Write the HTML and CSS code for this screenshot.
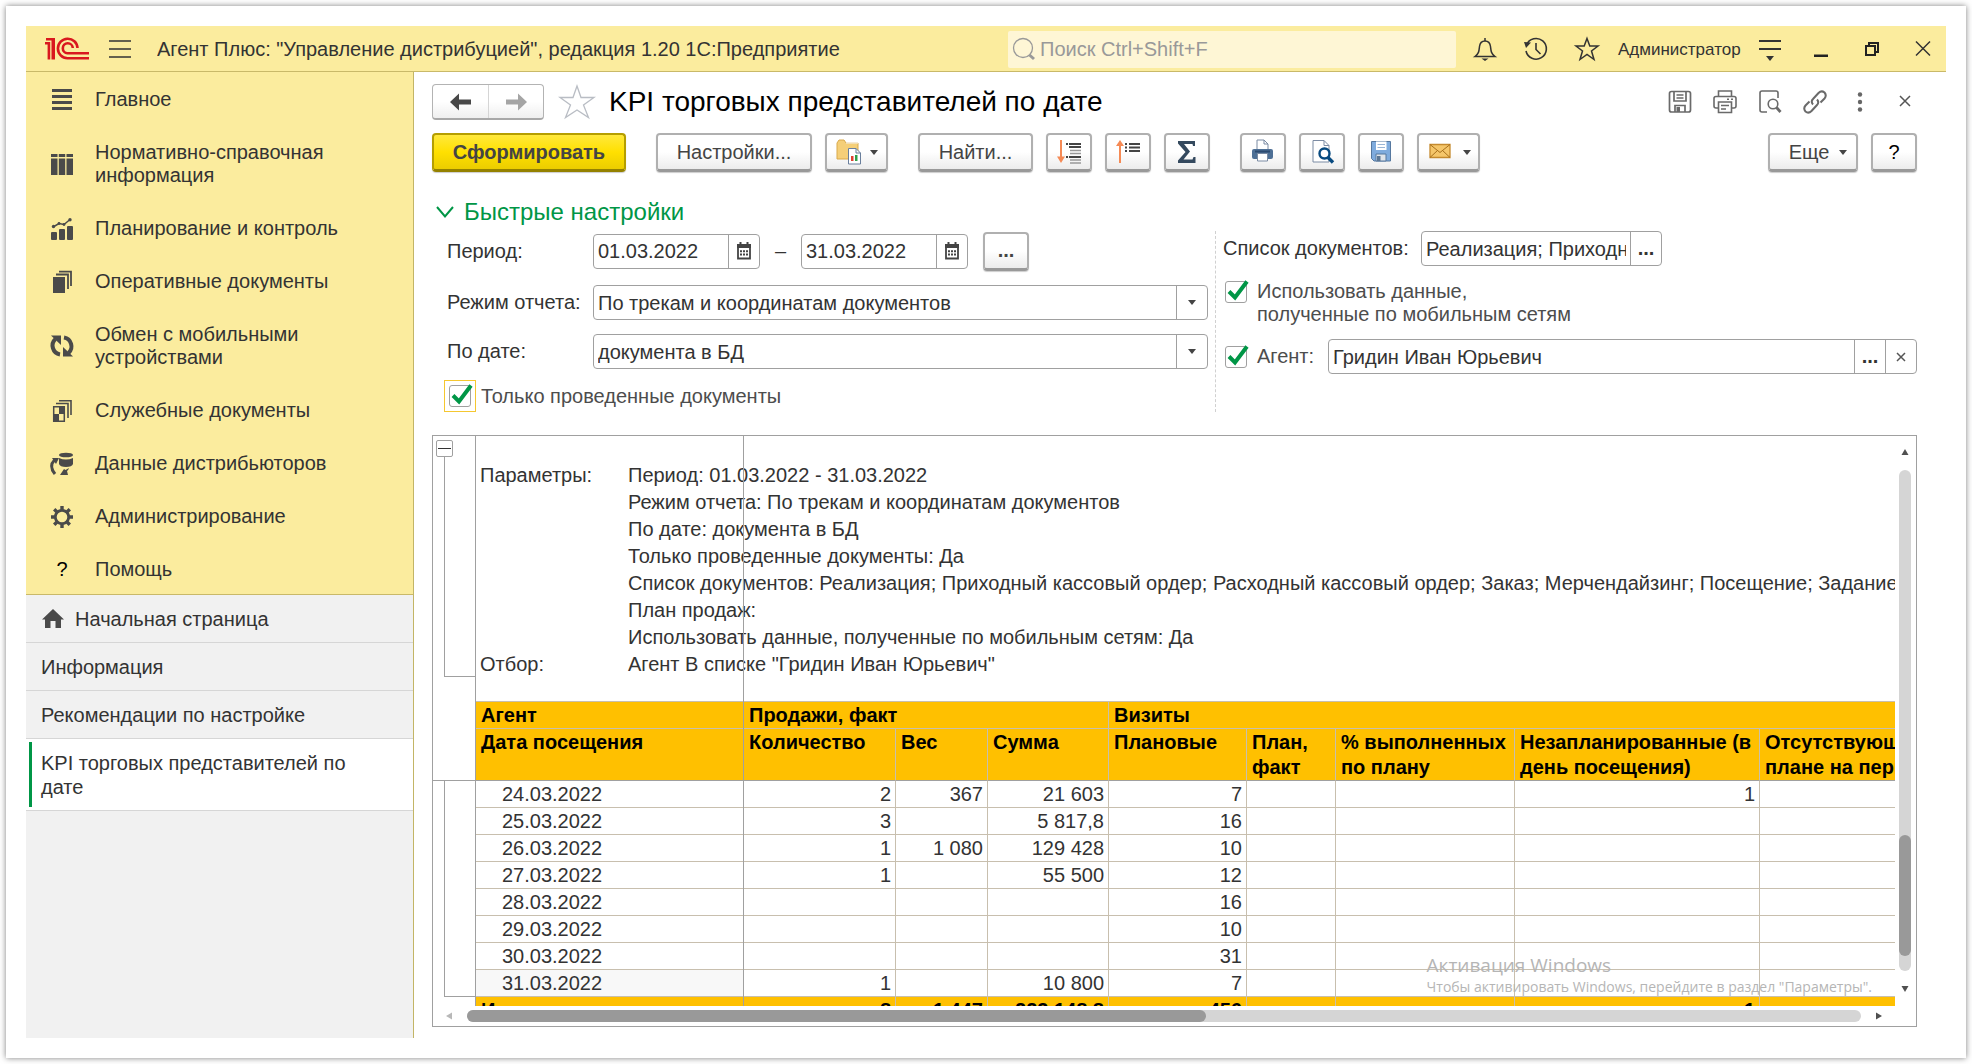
FILE: index.html
```html
<!DOCTYPE html>
<html lang="ru">
<head>
<meta charset="utf-8">
<meta name="viewport" content="width=device-width, initial-scale=1">
<title>KPI торговых представителей по дате</title>
<link rel="stylesheet" href="styles.css">
</head>
<body>
<div class="card">
<div class="app">
  <header class="topbar">
    <svg class="logo" width="44" height="24" viewBox="0 0 44 24" fill="#d9181e">
      <path d="M1 1H10V22.500H6.500V3.500H1ZM0 5H5.200V22.500H2.600V7.500H0Z"/>
      <path d="M32.500 11A9.800 9.800 0 1 0 22.500 21.300H44M27.800 11A5 5 0 1 0 22.500 16.300H44" fill="none" stroke="#d9181e" stroke-width="2.600"/>
    </svg>
    <button class="icon-btn burger" aria-label="Меню"><svg width="24" height="24" viewBox="0 0 24 24" stroke="#333" stroke-width="1.500"><path d="M1 4H23M1 12H23M1 20H23"/></svg></button>
    <div class="app-title">Агент Плюс: "Управление дистрибуцией", редакция 1.20 1С:Предприятие</div>
    <label class="search">
      <svg width="24" height="24" viewBox="0 0 24 24" fill="none" stroke="#999"><circle cx="11" cy="11" r="9.500" stroke-width="1.300"/><path d="M17.500 18L22 22" stroke-width="3"/></svg>
      <input type="search" placeholder="Поиск Ctrl+Shift+F" aria-label="Поиск">
    </label>
    <div class="top-tools">
      <button class="icon-btn" aria-label="Уведомления"><svg width="24" height="24" viewBox="0 0 24 24" fill="none" stroke="#333" stroke-width="1.500"><path d="M2 19.500C6 16.500 6 14 6.500 9.500C7 5.500 9.500 4 12 4S17 5.500 17.500 9.500C18 14 18 16.500 22 19.500Z"/><path d="M12 1V4"/><path d="M8.500 21.500H15.500L12 24Z" fill="#333" stroke="none"/></svg></button>
      <button class="icon-btn" aria-label="История"><svg width="24" height="24" viewBox="0 0 24 24" fill="none" stroke="#333" stroke-width="1.600"><path d="M2.500 8A10.300 10.300 0 1 1 2 14"/><path d="M12 6V12.500L16.500 17"/><path d="M0 5L7 5.500L2 11Z" fill="#333" stroke="none"/></svg></button>
      <button class="icon-btn" aria-label="Избранное"><svg width="24" height="24" viewBox="0 0 24 24" fill="none" stroke="#333" stroke-width="1.500"><path d="M12 1.500L14.800 9H23L16.500 14L19 22.500L12 17.500L5 22.500L7.500 14L1 9H9.200Z"/></svg></button>
      <span class="user">Администратор</span>
      <button class="icon-btn" aria-label="Сервис"><svg width="24" height="24" viewBox="0 0 24 24" stroke="#333" stroke-width="2"><path d="M1 4H23M1 12H23"/><path d="M8 19H16L12 24Z" fill="#333" stroke="none"/></svg></button>
      <button class="icon-btn" aria-label="Свернуть"><svg width="24" height="24" viewBox="0 0 24 24"><path d="M5 17.500H19V20H5Z" fill="#222"/></svg></button>
      <button class="icon-btn" aria-label="Развернуть"><svg width="24" height="24" viewBox="0 0 24 24" fill="none" stroke="#222" stroke-width="2"><path d="M6 9H15V18H6ZM9 9V6H18V15H15"/></svg></button>
      <button class="icon-btn" aria-label="Закрыть"><svg width="24" height="24" viewBox="0 0 24 24" stroke="#333" stroke-width="1.500"><path d="M5 4.500L19 18.500M19 4.500L5 18.500"/></svg></button>
    </div>
  </header>

  <div class="body">
    <aside class="sidebar">
      <nav class="sections">
        <a href="#"><svg width="24" height="24" viewBox="0 0 24 24" fill="#4a4a4a"><path d="M2 1H22V4H2ZM2 7H22V10H2ZM2 13H22V16H2ZM2 19H22V22H2Z"/></svg><span>Главное</span></a>
        <a href="#"><svg width="24" height="24" viewBox="0 0 24 24" fill="#4a4a4a"><path d="M1 2H7.500V5H1ZM8.800 2H15.200V5H8.800ZM16.500 2H23V5H16.500ZM1 6.500H7.500V23H1ZM8.800 6.500H15.200V23H8.800ZM16.500 6.500H23V23H16.500Z"/></svg><span>Нормативно-справочная<br>информация</span></a>
        <a href="#"><svg width="24" height="24" viewBox="0 0 24 24" fill="#4a4a4a"><rect x="1" y="15" width="6" height="8" rx="1"/><rect x="9" y="12" width="6" height="11" rx="1"/><rect x="17" y="9" width="6" height="14" rx="1"/><path d="M3 10L9 6.500L14 7.500L20 2.500" fill="none" stroke="#4a4a4a" stroke-width="1.500"/><circle cx="3.500" cy="9.500" r="1.700"/><circle cx="9" cy="6.500" r="1.400"/><circle cx="14" cy="7.500" r="1.400"/><circle cx="20" cy="2.800" r="1.700"/></svg><span>Планирование и контроль</span></a>
        <a href="#"><svg width="24" height="24" viewBox="0 0 24 24" fill="#4a4a4a"><path d="M3 7H15V23H3Z"/><path d="M6 4.500H18V19M9 1.700H21V16" fill="none" stroke="#4a4a4a" stroke-width="1.800"/></svg><span>Оперативные документы</span></a>
        <a href="#"><svg width="24" height="24" viewBox="0 0 24 24" fill="none" stroke="#4a4a4a" stroke-width="4"><path d="M10 20.500A9 9 0 0 1 5.500 5M14 3.500A9 9 0 0 1 18.500 19"/><path d="M1 1.500H11V11Z" fill="#4a4a4a" stroke="none"/><path d="M23 22.500H13V13Z" fill="#4a4a4a" stroke="none"/></svg><span>Обмен с мобильными<br>устройствами</span></a>
        <a href="#"><svg width="24" height="24" viewBox="0 0 24 24" fill="#4a4a4a"><path d="M6 4.500H18V19M9 1.700H21V16" fill="none" stroke="#4a4a4a" stroke-width="1.600"/><path d="M3.700 7.700H14.300V22.300H3.700Z" fill="none" stroke="#4a4a4a" stroke-width="1.500"/><path d="M9 8H14V15H9ZM4 15H9V22H4Z"/></svg><span>Служебные документы</span></a>
        <a href="#"><svg width="24" height="24" viewBox="0 0 24 24" fill="#4a4a4a"><ellipse cx="16" cy="3" rx="7" ry="2.300"/><path d="M9 6Q16 9 23 6V12Q22 15 16 15T9 12Z"/><path d="M5 22Q-1.500 14 4.500 8" fill="none" stroke="#4a4a4a" stroke-width="3"/><path d="M2 6H9L6 12ZM19 16Q18 19 17 19L18 23H10L14 17L15.500 18Z"/></svg><span>Данные дистрибьюторов</span></a>
        <a href="#"><svg width="24" height="24" viewBox="0 0 24 24" fill="none" stroke="#4a4a4a"><circle cx="12" cy="12" r="6.700" stroke-width="2.800"/><path d="M12 1V5M12 19V23M1 12H5M19 12H23M4.200 4.200L7 7M17 17L19.800 19.800M19.800 4.200L17 7M7 17L4.200 19.800" stroke-width="3.400"/></svg><span>Администрирование</span></a>
        <a href="#"><span class="q">?</span><span>Помощь</span></a>
      </nav>
      <nav class="windows">
        <a href="#"><svg width="24" height="24" viewBox="0 0 24 24" fill="#4a4a4a"><path d="M12 2L23 12.500H20V21H14.500V14H9.500V21H4V12.500H1Z"/></svg>Начальная страница</a>
        <a href="#">Информация</a>
        <a href="#">Рекомендации по настройке</a>
        <a href="#" class="active">KPI торговых представителей по дате</a>
      </nav>
    </aside>

    <main class="main">
      <div class="title-row">
        <div class="history">
          <button aria-label="Назад"><svg width="24" height="20" viewBox="0 0 24 20" fill="#484848"><path d="M1 10L10 1.500V7.500H22V12.500H10V18.500Z"/></svg></button>
          <button aria-label="Вперед"><svg width="24" height="20" viewBox="0 0 24 20" fill="#a5a5a5"><path d="M23 10L14 1.500V7.500H2V12.500H14V18.500Z"/></svg></button>
        </div>
        <button class="icon-btn fav" aria-label="В избранное"><svg width="36" height="34" viewBox="0 0 36 34" fill="#fff" stroke="#b9bdc4" stroke-width="1.300"><path d="M18 1L22 12.500H35L24.500 20L29.500 32.500L18 25L6.500 32.500L11.500 20L1 12.500H14Z"/></svg></button>
        <h1>KPI торговых представителей по дате</h1>
        <div class="page-tools">
          <button class="icon-btn" aria-label="Сохранить"><svg width="24" height="24" viewBox="0 0 24 24" fill="none" stroke="#6a6a6a" stroke-width="1.700"><rect x="1.500" y="1.500" width="21" height="20.500" rx="2"/><path d="M6 2V11H18V2M8.500 5H15.500M8.500 8H15.500M7 22V15.500H17V22"/><path d="M8.500 17H12V22H8.500Z" fill="#6a6a6a" stroke="none"/></svg></button>
          <button class="icon-btn" aria-label="Печать"><svg width="24" height="24" viewBox="0 0 24 24" fill="none" stroke="#6a6a6a" stroke-width="1.600"><path d="M5.500 6V1H18.500V6M5 18H3Q1 18 1 16V8.500Q1 6.500 3 6.500H21Q23 6.500 23 8.500V16Q23 18 21 18H19"/><path d="M5.500 12H18.500V22.500H5.500ZM8 15.500H16M8 19H13M14 9.300H16M18 9.300H20"/></svg></button>
          <button class="icon-btn" aria-label="Просмотр"><svg width="24" height="24" viewBox="0 0 24 24" fill="none" stroke="#6a6a6a" stroke-width="1.600"><path d="M9 22H4Q2 22 2 20V3Q2 1 4 1H18Q20 1 20 3V8"/><circle cx="15" cy="14" r="4.800"/><path d="M18.500 17.500L22.500 22" stroke-width="2.800"/></svg></button>
          <button class="icon-btn" aria-label="Ссылка"><svg width="24" height="24" viewBox="0 0 24 24" fill="none" stroke="#6a6a6a" stroke-width="2"><path d="M10 14.500Q7.500 11.500 10 9L15.500 3Q18.500 0 21.500 2.500Q24 5.500 21.500 8.500L17.500 12.500"/><path d="M14 9.500Q16.500 12.500 14 15L8.500 21Q5.500 24 2.500 21.500Q0 18.500 2.500 15.500L6.500 11.500"/></svg></button>
          <button class="icon-btn" aria-label="Ещё"><svg width="24" height="24" viewBox="0 0 24 24" fill="#666"><circle cx="12" cy="4.500" r="2.200"/><circle cx="12" cy="12" r="2.200"/><circle cx="12" cy="19.500" r="2.200"/></svg></button>
          <button class="icon-btn" aria-label="Закрыть вкладку"><svg width="24" height="24" viewBox="0 0 24 24" stroke="#555" stroke-width="1.500"><path d="M7 6L17 16M17 6L7 16"/></svg></button>
        </div>
      </div>

      <div class="toolbar">
        <button class="btn primary">Сформировать</button>
        <button class="btn settings">Настройки...</button>
        <button class="btn wide" aria-label="Варианты отчета"><svg width="26" height="26" viewBox="0 0 26 26"><path d="M1 20V4L3 1H8L10 4H22V20Z" fill="#f5cf78" stroke="#d9a94a"/><path d="M10 4H22" stroke="#fff" stroke-width="1"/><path d="M12.500 9.500H20L24.500 14V25H12.500Z" fill="#fff" stroke="#6a7f9c"/><path d="M20 9.500V14H24.500" fill="none" stroke="#6a7f9c"/><path d="M15 17H17.500V22H15Z" fill="#e04030"/><path d="M19 16H21.500V22H19Z" fill="#2fa04a"/></svg><i class="caret"></i></button>
        <button class="btn find">Найти...</button>
        <button class="btn sq" aria-label="Развернуть группы"><svg width="26" height="26" viewBox="0 0 26 26"><path d="M5 1V19" stroke="#f58a55" stroke-width="2"/><path d="M1 17.500H9L5 24Z" fill="#f58a55"/><path d="M10 5H12M10 18H12M13 5H25M13 8H25M13 18H25" stroke="#444" stroke-width="1.800"/><path d="M14 11.500H25M14 14.500H25M14 21H25M14 24H25" stroke="#999" stroke-width="1.600"/></svg></button>
        <button class="btn sq" aria-label="Свернуть группы"><svg width="26" height="26" viewBox="0 0 26 26"><path d="M5 6V24" stroke="#f58a55" stroke-width="2"/><path d="M1 7H9L5 1Z" fill="#f58a55"/><path d="M10 5H12M10 8.500H12M10 12H12M14 5H25M14 8.500H25M14 12H25" stroke="#444" stroke-width="1.800"/></svg></button>
        <button class="btn sq" aria-label="Сумма"><svg width="26" height="26" viewBox="0 0 26 26" fill="#34495e"><path d="M4 2H21V7H19L18.500 5H10L16 12.500L9.500 20.500H18.500L19.500 18H21.500V24H4V21.500L11.500 13L4 4.500Z"/></svg></button>
        <span class="gap"></span>
        <button class="btn sq" aria-label="Печать отчета"><svg width="26" height="26" viewBox="0 0 26 26"><path d="M7 12V1H14L18 5V12Z" fill="#fff" stroke="#7b8ba3"/><path d="M14 1V5H18" fill="none" stroke="#7b8ba3"/><rect x="2" y="10" width="21" height="10" rx="2" fill="#4e7096"/><path d="M5 12.500H20" stroke="#2c4a70" stroke-width="2"/><path d="M7.500 14.500H17.500V22H7.500Z" fill="#fff" stroke="#7b8ba3"/></svg></button>
        <button class="btn sq" aria-label="Предпросмотр"><svg width="26" height="26" viewBox="0 0 26 26"><path d="M4 1.500H15L20 6.500V23H4Z" fill="#fff" stroke="#7b8ba3"/><path d="M15 1.500V6.500H20" fill="none" stroke="#7b8ba3"/><circle cx="15.500" cy="14.500" r="5" fill="#fff" stroke="#084a80" stroke-width="2.400"/><path d="M19 18.500L24 23.500" stroke="#084a80" stroke-width="3.400"/></svg></button>
        <button class="btn sq" aria-label="Сохранить отчет"><svg width="26" height="26" viewBox="0 0 26 26"><path d="M3.500 2.500H22.500V22H6L3.500 19.500Z" fill="#7fabdd" stroke="#56789f"/><path d="M8 2.500H18.500V11H8Z" fill="#fff"/><path d="M9.500 5.500H17M9.500 8.500H17" stroke="#9ab5d5"/><path d="M8 15H18V22H8Z" fill="#dfe4ea" stroke="#56789f"/><path d="M9 17H12.500V22H9Z" fill="#5c7794"/></svg></button>
        <button class="btn wide mail" aria-label="Отправить"><svg width="26" height="26" viewBox="0 0 26 26"><path d="M3 5.500H23V18.500H3Z" fill="#f5c66a" stroke="#c58a2e" stroke-width="1.300"/><path d="M3 5.500L13 13.500L23 5.500M3 18.500L10.500 11.500M23 18.500L15.500 11.500" fill="none" stroke="#a8701c"/></svg><i class="caret"></i></button>
        <button class="btn more">Еще<i class="caret"></i></button>
        <button class="btn sq help">?</button>
      </div>

      <button class="group-title"><svg width="18" height="14" viewBox="0 0 18 14" fill="none" stroke="#009646" stroke-width="2"><path d="M1 3L9 12.500L17 3"/></svg>Быстрые настройки</button>

      <form class="form">
        <div class="left">
          <div class="row period">
            <label for="d1">Период:</label>
            <span class="field date"><input id="d1" type="text" value="01.03.2022"><button type="button" aria-label="Календарь"><svg width="16" height="18" viewBox="0 0 16 18"><path d="M2 3H14V16.500H2Z" fill="none" stroke="#444" stroke-width="1.800"/><path d="M1 2H15V6H1ZM3.500 0H5.500V3H3.500ZM10.500 0H12.500V3H10.500Z" fill="#444"/><path d="M4 9.200H12M4 12.600H12" stroke="#444" stroke-width="2" stroke-dasharray="2 1"/></svg></button></span>
            <span class="dash">–</span>
            <span class="field date"><input type="text" value="31.03.2022" aria-label="Конец периода"><button type="button" aria-label="Календарь"><svg width="16" height="18" viewBox="0 0 16 18"><path d="M2 3H14V16.500H2Z" fill="none" stroke="#444" stroke-width="1.800"/><path d="M1 2H15V6H1ZM3.500 0H5.500V3H3.500ZM10.500 0H12.500V3H10.500Z" fill="#444"/><path d="M4 9.200H12M4 12.600H12" stroke="#444" stroke-width="2" stroke-dasharray="2 1"/></svg></button></span>
            <button type="button" class="btn sq dots">...</button>
          </div>
          <div class="row">
            <label for="mode">Режим отчета:</label>
            <span class="field grow"><select id="mode"><option>По трекам и координатам документов</option></select><span class="drop"><i class="caret"></i></span></span>
          </div>
          <div class="row">
            <label for="bydate">По дате:</label>
            <span class="field grow"><select id="bydate"><option>документа в БД</option></select><span class="drop"><i class="caret"></i></span></span>
          </div>
          <label class="check only"><span class="box focus"><input type="checkbox" checked><svg width="24" height="24" viewBox="0 0 24 24" fill="none" stroke="#009646" stroke-width="4"><path d="M4 12.500L10 18.500L22 2.500"/></svg></span>Только проведенные документы</label>
        </div>
        <div class="right">
          <div class="row">
            <label for="docs" class="docs-label">Список документов:</label>
            <span class="field docs"><input id="docs" type="text" value="Реализация; Приходный кассовый ордер"><button type="button" aria-label="Выбрать документы" class="ell">...</button></span>
          </div>
          <label class="check two"><span class="box"><input type="checkbox" checked><svg width="24" height="24" viewBox="0 0 24 24" fill="none" stroke="#009646" stroke-width="4"><path d="M4 12.500L10 18.500L22 2.500"/></svg></span><span>Использовать данные,<br>полученные по мобильным сетям</span></label>
          <div class="row">
            <label class="check agent"><span class="box"><input type="checkbox" checked><svg width="24" height="24" viewBox="0 0 24 24" fill="none" stroke="#009646" stroke-width="4"><path d="M4 12.500L10 18.500L22 2.500"/></svg></span>Агент:</label>
            <span class="field grow"><input type="text" value="Гридин Иван Юрьевич" aria-label="Агент"><button type="button" aria-label="Выбрать агента" class="ell">...</button><button type="button" aria-label="Очистить"><svg width="12" height="12" viewBox="0 0 12 12" stroke="#555" stroke-width="1.500"><path d="M2 2L10 10M10 2L2 10"/></svg></button></span>
          </div>
        </div>
      </form>

      <section class="report">
        <div class="gutter">
          <button class="minus" aria-label="Свернуть группу"></button>
          <div class="tree t1"></div>
          <div class="tree-space"></div>
          <div class="tree t2"></div>
        </div>
        <div class="sheet">
          <dl class="params">
            <dt>Параметры:</dt><dd>Период: 01.03.2022 - 31.03.2022</dd>
            <dd>Режим отчета: По трекам и координатам документов</dd>
            <dd>По дате: документа в БД</dd>
            <dd>Только проведенные документы: Да</dd>
            <dd>Список документов: Реализация; Приходный кассовый ордер; Расходный кассовый ордер; Заказ; Мерчендайзинг; Посещение; Задание; Возврат</dd>
            <dd>План продаж:</dd>
            <dd>Использовать данные, полученные по мобильным сетям: Да</dd>
            <dt>Отбор:</dt><dd>Агент В списке "Гридин Иван Юрьевич"</dd>
          </dl>
          <table>
            <colgroup><col class="c1"><col class="c2"><col class="c3"><col class="c4"><col class="c5"><col class="c6"><col class="c7"><col class="c8"><col class="c9"></colgroup>
            <thead>
              <tr><th>Агент</th><th colspan="3">Продажи, факт</th><th colspan="5">Визиты</th></tr>
              <tr class="h2"><th>Дата посещения</th><th>Количество</th><th>Вес</th><th>Сумма</th><th>Плановые</th><th>План,<br>факт</th><th>% выполненных<br>по плану</th><th>Незапланированные (в<br>день посещения)</th><th>Отсутствующие в<br>плане на период</th></tr>
            </thead>
            <tbody>
              <tr><td>24.03.2022</td><td>2</td><td>367</td><td>21 603</td><td>7</td><td></td><td></td><td>1</td><td></td></tr>
              <tr><td>25.03.2022</td><td>3</td><td></td><td>5 817,8</td><td>16</td><td></td><td></td><td></td><td></td></tr>
              <tr><td>26.03.2022</td><td>1</td><td>1 080</td><td>129 428</td><td>10</td><td></td><td></td><td></td><td></td></tr>
              <tr><td>27.03.2022</td><td>1</td><td></td><td>55 500</td><td>12</td><td></td><td></td><td></td><td></td></tr>
              <tr><td>28.03.2022</td><td></td><td></td><td></td><td>16</td><td></td><td></td><td></td><td></td></tr>
              <tr><td>29.03.2022</td><td></td><td></td><td></td><td>10</td><td></td><td></td><td></td><td></td></tr>
              <tr><td>30.03.2022</td><td></td><td></td><td></td><td>31</td><td></td><td></td><td></td><td></td></tr>
              <tr><td class="current">31.03.2022</td><td>1</td><td></td><td>10 800</td><td>7</td><td></td><td></td><td></td><td></td></tr>
            </tbody>
            <tfoot><tr><td>Итого</td><td>8</td><td>1 447</td><td>223 148,8</td><td>456</td><td></td><td></td><td>1</td><td></td></tr></tfoot>
          </table>
          <div class="freeze"></div>
        </div>
        <div class="vscroll"><svg width="8" height="8" viewBox="0 0 8 8"><path d="M4 1L7.500 7H0.500Z" fill="#505050"/></svg><div class="track"><div class="thumb"></div></div><svg width="8" height="8" viewBox="0 0 8 8"><path d="M4 7L7.500 1H0.500Z" fill="#505050"/></svg></div>
        <div class="hscroll"><svg width="8" height="8" viewBox="0 0 8 8"><path d="M1 4L7 0.500V7.500Z" fill="#b8b8b8"/></svg><div class="track"><div class="thumb"></div></div><svg width="8" height="8" viewBox="0 0 8 8"><path d="M7 4L1 0.500V7.500Z" fill="#505050"/></svg></div>
        <div class="watermark"><p class="w1">Активация Windows</p><p class="w2">Чтобы активировать Windows, перейдите в раздел "Параметры".</p></div>
      </section>
    </main>
  </div>
</div>
</div>
</body>
</html>
```
FILE: styles.css
```css
* { box-sizing: border-box; }
body {
  margin: 0;
  padding: 6px;
  height: 100vh;
  min-height: 900px;
  display: flex;
  background: #fff;
  color: #333;
  font: 20px/23px "Liberation Sans", Arial, sans-serif;
}
button, input, select { font: inherit; color: inherit; margin: 0; padding: 0; border: 0; background: none; }
a { color: inherit; text-decoration: none; }
svg { display: block; flex: none; overflow: visible; }
.card {
  flex: 1;
  min-width: 0;
  display: flex;
  padding: 20px;
  background: #fff;
  box-shadow: 0 0 6px rgba(0, 0, 0, .5);
}
.app { flex: 1; min-width: 0; display: flex; flex-direction: column; }

/* Top bar */
.topbar {
  display: flex;
  align-items: center;
  height: 46px;
  padding: 1px 11px 0 19px;
  background: #fbec9e;
  border-bottom: 1px solid #c9b969;
}
.icon-btn { display: block; flex: none; }
.burger { margin: 0 25px 0 19px; }
.app-title { flex: 1; min-width: 0; white-space: nowrap; overflow: hidden; }
.search {
  display: flex;
  align-items: center;
  gap: 4px;
  width: 448px;
  height: 37px;
  padding: 0 4px;
  background: #fef6d5;
  border-radius: 2px;
}
.search input { flex: 1; min-width: 0; outline: 0; }
.search input::placeholder { color: #999; opacity: 1; }
.top-tools { display: flex; align-items: center; gap: 27px; margin-left: 17px; }
.user { margin: 0 -8px; width: 121px; font-size: 17px; white-space: nowrap; }

.body { flex: 1; min-height: 0; display: flex; }

/* Sidebar */
.sidebar {
  width: 388px;
  flex: none;
  display: flex;
  flex-direction: column;
  background: #f1f1f1;
  border-right: 1px solid #c3b566;
}
.sections { background: #fbec9e; box-shadow: inset 0 -1px #c9b969; }
.sections a {
  display: flex;
  gap: 21px;
  align-items: center;
  padding: 16px 12px 14px 24px;
}
.sections svg { margin: -1px 0; }
.q { width: 24px; text-align: center; color: #000; }
.windows a {
  display: flex;
  align-items: center;
  gap: 10px;
  padding: 12px 60px 11px 15px;
  line-height: 24px;
  border-bottom: 1px solid #d6d6d6;
}
.windows .active {
  background: linear-gradient(#009646, #009646) 3px center / 3px 65px no-repeat #fff;
}

/* Main */
.main {
  flex: 1;
  min-width: 0;
  display: flex;
  flex-direction: column;
  padding: 12px 29px 11px 18px;
}
.title-row { display: flex; align-items: center; height: 36px; }
.history {
  display: flex;
  height: 36px;
  border: 1px solid #b3b3b3;
  border-bottom: 2px solid #a8a8a8;
  border-radius: 4px;
  background: linear-gradient(#fff 50%, #efefef);
}
.history button { width: 55px; display: flex; align-items: center; justify-content: center; }
.history button + button { border-left: 1px solid #d5d5d5; }
.fav { margin: 0 14px 0 15px; }
h1 { flex: 1; margin: 0; font-size: 28px; line-height: 36px; font-weight: 400; color: #000; white-space: nowrap; }
.page-tools { display: flex; gap: 21px; }

.toolbar { display: flex; gap: 13px; margin-top: 13px; }
.btn {
  display: flex;
  align-items: center;
  justify-content: center;
  flex: none;
  height: 39px;
  border: 2px solid #b0b0b0;
  border-bottom: 3px solid #999;
  border-radius: 4px;
  background: linear-gradient(#fff 50%, #ececec);
  box-shadow: 0 1px 1px #ccc;
  color: #444;
}
.primary {
  width: 194px;
  margin-right: 17px;
  border-color: #b59e00;
  border-bottom-color: #948100;
  background: linear-gradient(#ffe83c, #ffe000 50%, #ebcd00);
  font-weight: 700;
}
.settings { width: 156px; }
.wide { width: 63px; gap: 8px; }
.mail { gap: 10px; }
.find { width: 115px; margin-left: 17px; }
.sq { width: 46px; }
.gap { width: 4px; }
.more { width: 90px; margin-left: auto; gap: 10px; padding-left: 10px; }
.help { color: #000; }
.caret { width: 0; height: 0; border: 4px solid transparent; border-top: 5px solid #444; border-bottom: 0; }

.group-title {
  display: flex;
  align-items: center;
  align-self: flex-start;
  gap: 10px;
  height: 30px;
  margin: 24px 0 5px 4px;
  font-size: 24px;
  color: #009646;
}

/* Quick settings */
.form { display: grid; grid-template-columns: 783fr 702fr; }
.left { padding: 0 7px 0 15px; }
.right { padding-left: 7px; border-left: 1px dashed #d0d0d0; }
.row { display: flex; align-items: center; height: 35px; margin-bottom: 14px; }
.period { height: 40px; }
.left .row > label { width: 146px; white-space: nowrap; }
.field {
  position: relative;
  display: flex;
  height: 35px;
  border: 1px solid #a0a0a0;
  border-radius: 4px;
  background: #fff;
}
.field input, .field select { flex: 1; min-width: 0; outline: 0; appearance: none; padding: 1px 4px 0; }
.field button { width: 31px; flex: none; display: flex; align-items: center; justify-content: center; border-left: 1px solid #a0a0a0; }
.field .ell, .dots { font-weight: 700; }
.grow { flex: 1; min-width: 0; }
.date { width: 167px; }
.drop {
  position: absolute;
  top: 0;
  right: 0;
  bottom: 0;
  width: 31px;
  display: flex;
  align-items: center;
  justify-content: center;
  border-left: 1px solid #a0a0a0;
  pointer-events: none;
}
.dash { width: 41px; text-align: center; }
.dots { margin-left: 15px; }
.check { display: flex; align-items: center; color: #4d4d4d; }
.box { position: relative; flex: none; width: 22px; height: 22px; margin-right: 10px; }
.box input { display: block; width: 22px; height: 22px; appearance: none; border: 1px solid #a0a0a0; border-radius: 3px; background: #fff; }
.box svg { position: absolute; left: 0; top: -2px; pointer-events: none; }
.focus { outline: 1px solid #f5c730; outline-offset: 4px; }
.only { height: 32px; margin: -3px 0 0 2px; }
.two { align-items: flex-start; margin: 0 0 13px 2px; }
.two .box { margin-top: 1px; }
.agent { width: 103px; margin-left: 2px; }
.docs-label { width: 198px; }
.docs { width: 241px; }

/* Report */
.report {
  position: relative;
  flex: 1;
  min-height: 0;
  margin-top: 23px;
  display: grid;
  grid-template-columns: 43px minmax(0, 1fr) 21px;
  grid-template-rows: minmax(0, 1fr) 20px;
  border: 1px solid #a0a0a0;
  color: #333;
}
.gutter { border-right: 1px solid #a0a0a0; padding: 4px 0 0 3px; overflow: hidden; }
.minus {
  display: block;
  width: 17px;
  height: 17px;
  border: 1px solid #a0a0a0;
  border-radius: 2px;
  background: linear-gradient(#333, #333) center / 13px 1px no-repeat #fff;
}
.tree { margin-left: 8px; border-left: 1px solid #a0a0a0; border-bottom: 1px solid #a0a0a0; }
.t1 { height: 220px; }
.tree-space { height: 104px; margin-left: -3px; border-bottom: 1px solid #a0a0a0; }
.t2 { height: 216px; }
.sheet { position: relative; overflow: hidden; }
.params {
  display: grid;
  grid-template-columns: 148px max-content;
  grid-auto-rows: 27px;
  margin: 0;
  padding: 26px 0 23px 4px;
  line-height: 27px;
}
.params dt { grid-column: 1; }
.params dd { grid-column: 2; margin: 0; white-space: nowrap; }
table { width: 1529px; table-layout: fixed; border-collapse: separate; border-spacing: 0; }
.c1 { width: 268px; }
.c2 { width: 152px; }
.c3 { width: 92px; }
.c4 { width: 121px; }
.c5 { width: 138px; }
.c6 { width: 89px; }
.c7 { width: 179px; }
.c8 { width: 245px; }
.c9 { width: 245px; }
th, td { height: 27px; padding: 1px 4px 0 5px; border-top: 1px solid #c8bfae; border-right: 1px solid #c8bfae; line-height: 25px; white-space: nowrap; text-align: right; }
th { background: #ffc000; color: #000; text-align: left; vertical-align: top; }
.h2 th { height: 52px; }
tbody tr:first-child td { border-top-color: #a0a0a0; }
td:first-child { text-align: left; padding-left: 26px; }
.current { background: #f8f8f8; }
tfoot td { background: #ffc000; color: #000; font-weight: 700; }
tfoot td:first-child { padding-left: 5px; }
.freeze { position: absolute; top: 0; bottom: 0; left: 267px; width: 1px; background: #a0a0a0; }
.vscroll { display: flex; flex-direction: column; align-items: center; gap: 14px; padding: 12px 2px 13px 0; }
.vscroll .track { flex: 1; width: 12px; padding-top: 365px; border-radius: 6px; background: #d5d5d5; }
.vscroll .thumb { height: 121px; border-radius: 6px; background: #999; }
.hscroll { grid-column: 1 / -1; display: flex; align-items: center; gap: 14px; padding: 0 33px 0 12px; }
.hscroll .track { flex: 1; height: 12px; border-radius: 6px; background: #d5d5d5; }
.hscroll .thumb { width: 53%; height: 12px; border-radius: 6px; background: #999; }
.watermark { position: absolute; right: 44px; bottom: 29px; color: #b5b5b5; font-family: "Open Sans", "Noto Sans", sans-serif; white-space: nowrap; }
.watermark p { margin: 0; }
.w1 { font-size: 19px; line-height: 24px; }
.w2 { font-size: 14px; line-height: 20px; }
```
